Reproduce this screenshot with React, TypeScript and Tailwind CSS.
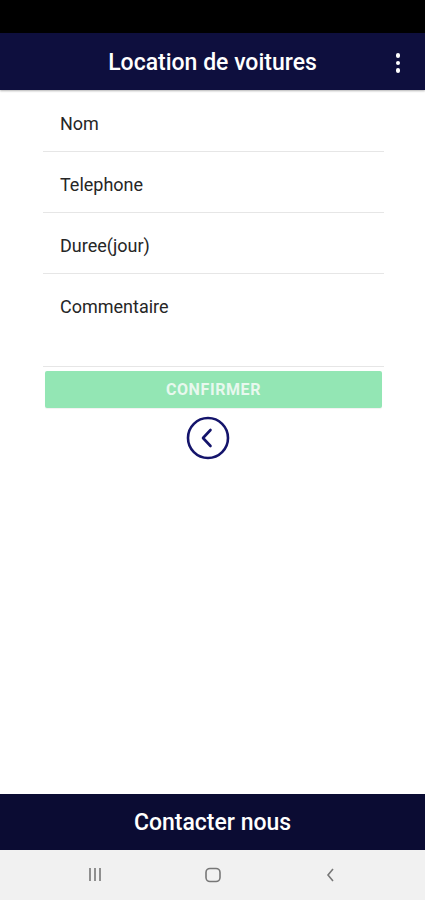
import React from 'react'

const fields = [
  { label: 'Nom', h: 'h-[61px]' },
  { label: 'Telephone', h: 'h-[61px]' },
  { label: 'Duree(jour)', h: 'h-[61px]' },
  { label: 'Commentaire', h: 'h-[93px]' },
]

function BackCircle() {
  return (
    <svg width="44" height="44" viewBox="0 0 44 44" fill="none">
      <circle cx="22" cy="22" r="20" stroke="#14146b" strokeWidth="2.6" />
      <path d="M24.5 14 L17 22 L24.5 30" stroke="#14146b" strokeWidth="2.6" strokeLinecap="round" strokeLinejoin="round" />
    </svg>
  )
}

export default function App() {
  return (
    <div className="flex h-[900px] w-full flex-col bg-white font-['Roboto',sans-serif]">
      {/* status bar */}
      <div className="h-[33px] bg-black" />

      {/* header */}
      <div className="relative flex h-[57px] items-center justify-center bg-[#0e0f3e] pt-[3px] shadow-[0_1px_2px_rgba(0,0,0,0.3)]">
        <h1 className="text-[23px] font-medium text-white">Location de voitures</h1>
        <div className="absolute right-[25px] top-[20px] flex flex-col gap-[3px]">
          <span className="block h-[4.5px] w-[4.5px] rounded-full bg-white" />
          <span className="block h-[4.5px] w-[4.5px] rounded-full bg-white" />
          <span className="block h-[4.5px] w-[4.5px] rounded-full bg-white" />
        </div>
      </div>

      {/* form */}
      <div className="flex flex-1 flex-col pl-[43px] pr-[41px] pt-px">
        {fields.map((f) => (
          <div key={f.label} className={`${f.h} border-b border-[#e6e6e6] pl-[17px] pt-[22px]`}>
            <span className="text-[18px] leading-[22px] text-[#262626]">{f.label}</span>
          </div>
        ))}
        <button className="mx-[2px] mt-[4px] h-[37px] rounded-[2px] bg-[#93e6b4] text-[16px] font-bold tracking-[0.6px] text-[#e8f8ee] shadow-[0_1px_1px_rgba(0,0,0,0.06)]">
          CONFIRMER
        </button>
        <div className="mt-[8px] flex justify-center pr-[12px]">
          <BackCircle />
        </div>
      </div>

      {/* footer */}
      <div className="flex h-[56px] items-center justify-center bg-[#0b0c33] pt-[2px]">
        <span className="text-[23px] font-medium text-white">Contacter nous</span>
      </div>

      {/* system nav */}
      <div className="flex h-[50px] items-center justify-center bg-[#f1f1f1]">
        <div className="flex w-[118px] justify-center">
          <svg width="20" height="16" viewBox="0 0 20 16">
            <path d="M5 1v13M10 1v13M15 1v13" stroke="#777" strokeWidth="1.6" />
          </svg>
        </div>
        <div className="flex w-[118px] justify-center">
          <svg width="18" height="16" viewBox="0 0 18 16">
            <rect x="2" y="1.5" width="14" height="13" rx="4" fill="none" stroke="#777" strokeWidth="1.6" />
          </svg>
        </div>
        <div className="flex w-[118px] justify-center">
          <svg width="16" height="16" viewBox="0 0 16 16">
            <path d="M10 2 L5 8 L10 14" fill="none" stroke="#777" strokeWidth="1.6" />
          </svg>
        </div>
      </div>
    </div>
  )
}
